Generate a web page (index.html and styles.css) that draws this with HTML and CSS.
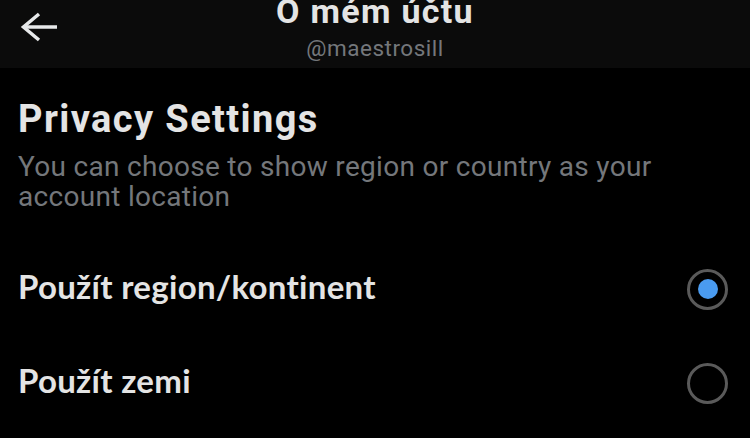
FILE: index.html
```html
<!DOCTYPE html>
<html>
<head>
    <title>O mém účtu</title>
    <link rel="stylesheet" href="styles.css">
</head>
<body>
    <div class="top-bar">
        <button class="back-btn" aria-label="Zpět">
            <svg width="38" height="32" viewBox="0 0 38 32" fill="none" stroke="#e7e9ea" stroke-width="3.5" stroke-linejoin="miter">
                <path d="M37 16H3"/>
                <path d="M19 3L3.5 16 19 29"/>
            </svg>
        </button>
        <div class="top-titles">
            <div class="top-title">O mém účtu</div>
            <div class="top-handle">@maestrosill</div>
        </div>
    </div>

    <div class="content">
        <h1>Privacy Settings</h1>
        <p class="desc">You can choose to show region or country as your account location</p>

        <div class="options">
            <label class="option">
                <span>Použít region/kontinent</span>
                <span class="radio checked"></span>
            </label>
            <label class="option">
                <span>Použít zemi</span>
                <span class="radio"></span>
            </label>
        </div>
    </div>
</body>
</html>
```

FILE: styles.css
```css
body {
    margin: 0;
    background-color: #000000;
    font-family: Roboto, sans-serif;
    color: #e7e9ea;
    height: 438px;
    overflow: hidden;
}

.top-bar {
    height: 68px;
    background-color: #0b0b0b;
    display: flex;
    align-items: flex-start;
    position: relative;
}

.back-btn {
    position: absolute;
    left: 20px;
    top: 11px;
    background: none;
    border: none;
    padding: 0;
    display: flex;
}

.top-titles {
    flex: 1;
    display: flex;
    flex-direction: column;
    align-items: center;
}

.top-title {
    font-size: 34px;
    font-weight: 700;
    line-height: 23px;
    letter-spacing: 1.3px;
    color: #e4e4e4;
}

.top-handle {
    margin-top: 12px;
    font-size: 22.5px;
    line-height: 26px;
    letter-spacing: 0.5px;
    color: #74777b;
}

.content {
    padding: 0 18px;
}

h1 {
    margin: 29px 0 0;
    font-size: 38px;
    font-weight: 700;
    line-height: 44px;
    letter-spacing: 1.4px;
    color: #e4e4e4;
}

.desc {
    margin: 11px 0 0;
    font-size: 28px;
    line-height: 30px;
    letter-spacing: 0.3px;
    color: #74777b;
    max-width: 660px;
}

.options {
    margin-top: 27px;
}

.option {
    display: flex;
    align-items: center;
    justify-content: space-between;
    height: 94px;
    font-family: Lato, Roboto, sans-serif;
    font-size: 33px;
    font-weight: 700;
    letter-spacing: 0.3px;
    color: #e4e4e4;
}

.radio {
    box-sizing: border-box;
    width: 41px;
    height: 41px;
    border: 3.5px solid #5a5a5a;
    border-radius: 50%;
    display: flex;
    align-items: center;
    justify-content: center;
    margin: 6px 4px 0 0;
}

.radio.checked::after {
    content: "";
    width: 20px;
    height: 20px;
    border-radius: 50%;
    background-color: #4a9bf0;
}
```
